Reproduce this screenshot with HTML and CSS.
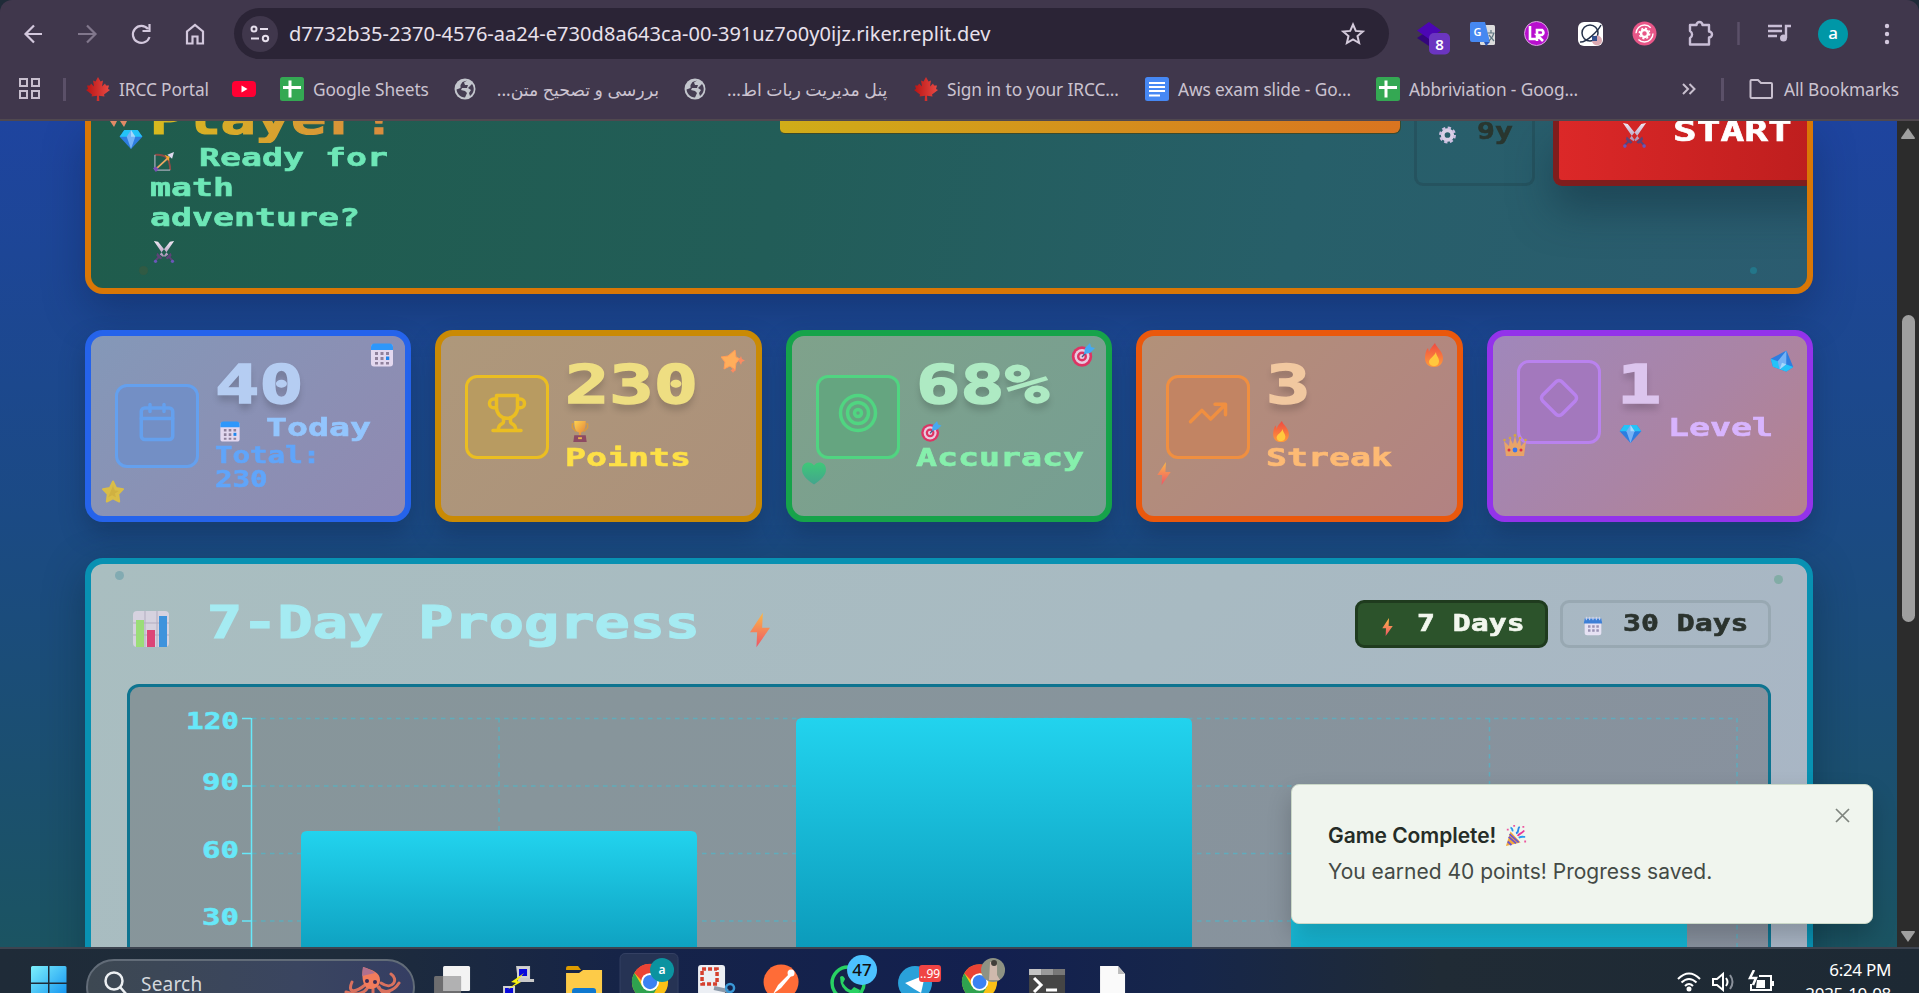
FILE: index.html
```html
<!DOCTYPE html>
<html lang="en">
<head>
<meta charset="utf-8">
<title>Math Adventure</title>
<link rel="stylesheet" href="styles.css">
</head>
<body>
<svg class="defs" width="0" height="0">
  <defs>
    <linearGradient id="gBolt" x1="0" y1="0" x2="0" y2="1"><stop offset="0" stop-color="#fbb848"/><stop offset="1" stop-color="#ee5566"/></linearGradient>
    <linearGradient id="gFire" x1="0" y1="0" x2="0" y2="1"><stop offset="0" stop-color="#ef4a42"/><stop offset="1" stop-color="#ff9a3a"/></linearGradient>
    <linearGradient id="gCup" x1="0" y1="0" x2="1" y2="1"><stop offset="0" stop-color="#ffd34f"/><stop offset="1" stop-color="#e0803a"/></linearGradient>
    <linearGradient id="gBlade" x1="0" y1="0" x2="0" y2="1"><stop offset="0" stop-color="#f1e9f4"/><stop offset="1" stop-color="#a78fb5"/></linearGradient>
    <linearGradient id="gHeart" x1="0" y1="0" x2="0" y2="1"><stop offset="0" stop-color="#3fc878"/><stop offset="1" stop-color="#43a58d"/></linearGradient>
    <linearGradient id="gBar" x1="0" y1="0" x2="0" y2="1"><stop offset="0" stop-color="#22d3ee"/><stop offset="1" stop-color="#0891b2"/></linearGradient>
    <linearGradient id="gWin" x1="0" y1="0" x2="1" y2="1"><stop offset="0" stop-color="#7df0fc"/><stop offset="1" stop-color="#0a8cf0"/></linearGradient>
    <linearGradient id="gLeaf" x1="0" y1="0" x2="1" y2="0"><stop offset="0" stop-color="#b81414"/><stop offset="1" stop-color="#ea4a44"/></linearGradient>
    <symbol id="calendar" viewBox="0 0 24 24"><rect x="1" y="1" width="22" height="22.500" rx="3" fill="#e3d8ef"/><path d="M1 7V4a3.500 3.500 0 0 1 3.500-3.500h15A3.500 3.500 0 0 1 23 4v3z" fill="#2d97fb"/><g fill="#8f819c"><path d="M5 9h3v3H5zM10.500 9h3v3h-3zM16 9h3v3h-3zM5 14h3v3H5zM10.500 14h3v3h-3zM5 19h3v2.500H5zM10.500 19h3v2.500h-3zM16 19h3v2.500h-3z"/></g><path d="M16 13.500h3.300V17H16z" fill="#1d86ee"/></symbol>
    <symbol id="pad" viewBox="0 0 24 24"><rect x="2" y="2" width="20" height="21" rx="3" fill="#e6e2f4"/><path d="M1 9l1-6h20l1 6z" fill="#3d7fd6"/><path d="M4 1v4M8 1v4M12 1v4M16 1v4M20 1v4" stroke="#cdd6ee" stroke-width="1.200"/><path d="M6 11h3v3H6zM11 11h3v3h-3zM16 11h3v3h-3zM6 16h3v3H6zM11 16h3v3h-3zM16 16h3v3h-3z" fill="#9b94b5"/></symbol>
    <symbol id="star" viewBox="0 0 24 24"><path d="M12 1.500l3.200 6.800 7.300 1.200-5 5.300 1 7.700-6.500-3.300-6.500 3.300 1-7.700-5-5.300 7.300-1.200z" fill="#d9bd48" stroke="#d9bd48" stroke-width="2" stroke-linejoin="round"/><path d="M12 6l2 5 4 .5-4 2.500 1 4-4-2-4 2" fill="#c9a83e" opacity=".6"/></symbol>
    <symbol id="sparkstar" viewBox="0 0 24 24"><path d="M14 1l1 7 4 2-4 4-1 7-5-4-6 3 1-7-4-5 7-1z" fill="#ffae5b" stroke="#ff9c58" stroke-linejoin="round"/><path d="M20 7l1 3 3 1.500-3 1.500-1 3-1.500-3-2-1.500 2-1.500zM12 18.500l1 2 2 1-2 1-1 1.500-1-1.500-1.500-1 1.500-1z" fill="#fb8b61"/></symbol>
    <symbol id="target" viewBox="0 0 24 24"><circle cx="11" cy="13.500" r="10.200" fill="#dd3464"/><circle cx="11" cy="13.500" r="7.500" fill="#e9cbe0"/><circle cx="11" cy="13.500" r="5" fill="#dd3464"/><circle cx="11" cy="13.500" r="2.500" fill="#e9cbe0"/><path d="M11 14l8-9" stroke="#445b8c" stroke-width="1.300"/><path d="M13 11l1-6 5-5 1 4 4 1-5 5z" fill="#45a9f2"/></symbol>
    <symbol id="fire" viewBox="0 0 24 24"><path d="M13 0c1 4 8 8 8 15 0 6-4 9-9 9s-9-3-9-9c0-4 1-8 3-10l1 4c1-4 4-6 6-9z" fill="url(#gFire)"/><path d="M14 9c0 4 3 5 3 9 0 3-2 5-5 5s-5-2-5-4c0-4 5-5 7-10z" fill="#ffc83e"/></symbol>
    <symbol id="bolt" viewBox="0 0 14 24"><path d="M9 0L0 13.500h5L4.500 24 14 10.500H8.500z" fill="url(#gBolt)"/></symbol>
    <symbol id="gem" viewBox="0 0 24 20"><path d="M5 0h14l5 7-12 13L0 7z" fill="#2d7de0"/><path d="M5 0h14l5 7H0z" fill="#24c3f8"/><path d="M7.500 7L12 0l4.500 7L12 20z" fill="#75b2f5"/><path d="M12 0l4.500 7H12z" fill="#a5d9fb"/></symbol>
    <symbol id="crown" viewBox="0 0 24 22"><path d="M1 7l5 5 1-8 3 6 2-8 2 8 3-6 1 8 5-5-2 15H3z" fill="#e8a468"/><path d="M3 13h18l-.6 9H3.600z" fill="#e8a468"/><g fill="#d5a63f"><circle cx="1.500" cy="6" r="1.300"/><circle cx="7" cy="4" r="1.300"/><circle cx="12" cy="1.500" r="1.400"/><circle cx="17" cy="4" r="1.300"/><circle cx="22.500" cy="6" r="1.300"/></g><circle cx="12" cy="16" r="2.400" fill="#3975ea"/><circle cx="6" cy="16" r="1.500" fill="#dc3045"/><circle cx="18" cy="16" r="1.500" fill="#dc3045"/></symbol>
    <symbol id="heart" viewBox="0 0 24 22"><path d="M12 22C5 17 0 13 0 7 0-1 9-2 12 3c3-5 12-4 12 4C24 13 19 17 12 22z" fill="url(#gHeart)"/></symbol>
    <symbol id="cup" viewBox="0 0 18 22"><path d="M3 3H1v4l4 4M15 3h2v4l-4 4" fill="none" stroke="#d99b3b" stroke-width="1.500"/><path d="M3 0h12c0 7-1 11-5 12v3H8v-3C4 11 3 7 3 0z" fill="url(#gCup)"/><path d="M3 15h12l1 7H2z" fill="#8d4a63"/><path d="M7 17h4v2H7z" fill="#efb34d"/></symbol>
    <symbol id="swords" viewBox="0 0 24 26"><path d="M0 0l5 1 12 15-4 3zM24 0l-5 1L7 16l4 3z" fill="url(#gBlade)"/><path d="M4 14l6 6-2 1.500-2-1-4 4-1.500-1.500 4-4-1.500-2zM20 14l-6 6 2 1.500 2-1 4 4 1.500-1.500-4-4 1.500-2z" fill="#5d4377"/><circle cx="2" cy="24" r="1.900" fill="#6a57b8"/><circle cx="22" cy="24" r="1.900" fill="#6a57b8"/></symbol>
    <symbol id="bow" viewBox="0 0 22 21"><path d="M2 3C13 2 18 7 18 19" fill="none" stroke="#8d4b46" stroke-width="2"/><path d="M2 3v16h16" fill="none" stroke="#cfc6dc" stroke-width="1"/><path d="M3 18L17 5" stroke="#eda862" stroke-width="1.800"/><path d="M22 0l-2 7-5-4z" fill="#e0daf0"/><path d="M0 17l3-2 3 3-3 3z" fill="#7b51b6"/><path d="M12 3l5 2v5z" fill="#f3a72a"/></symbol>
    <symbol id="gear" viewBox="0 0 20 18"><circle cx="10" cy="9" r="5" fill="none" stroke="#d9cfe6" stroke-width="4"/><circle cx="10" cy="9" r="7.600" fill="none" stroke="#cdbfe0" stroke-width="2.600" stroke-dasharray="3.400 2.570"/></symbol>
    <symbol id="chart" viewBox="0 0 36 36"><rect width="36" height="36" rx="4" fill="#d6d2df"/><path d="M0 12h36M0 24h36M12 0v36M24 0v36" stroke="#b3adc0"/><path d="M3 9h8v27H3z" fill="#9bdd78"/><path d="M14 19h8v17h-8z" fill="#dc4577"/><path d="M26 5h8v31h-8z" fill="#3e93dc"/></symbol>
    <symbol id="party" viewBox="0 0 24 24"><path d="M6 7l11 12L1 23z" fill="#f4a93b"/><path d="M4 13l8 7M5 10l10 9M3 18l4 4" stroke="#6c55cf" stroke-width="2"/><g fill="none" stroke-width="2"><path d="M8 7C9 5 7 3 6 3M15 14c3-2 5-1 7-1" stroke="#289bee"/><path d="M12 9c4-1 1-5 4-7" stroke="#2c8ae8"/><path d="M14 12c1-3 4-2 7-6" stroke="#e7399a"/></g><path d="M2 4h2v2H2zM19 1h2v2h-2zM21 17h2v2h-2zM9 0h2v2H9z" fill="#ed579f"/></symbol>
    <symbol id="leaf" viewBox="0 0 24 24"><path d="M12 0l2.500 4.500L17 3.500l-1 6 3-3 1 2h3l-1 3.500 2 1-6 4.500.5 2-5.500-.7.300 5.200h-2.600l.3-5.200-5.500.7.500-2L0 13l2-1-1-3.500h3l1-2 3 3-1-6 2.500 1z" fill="url(#gLeaf)"/></symbol>
    <symbol id="sheet" viewBox="0 0 24 24"><rect width="24" height="24" rx="2.500" fill="#34a853"/><path d="M3 10.500h18M10 3.500v17" stroke="#fff" stroke-width="3"/></symbol>
    <symbol id="globe" viewBox="0 0 22 22"><circle cx="11" cy="11" r="10.500" fill="#c3c6cd"/><path d="M13 2.500l-3 2 1 2.500h3l-1 3H8l-1 2 4 1 2 2-2 4.500c-5 0-8-4-8.500-8l4-1.500 0-3 2-3zM18 6c3 4 2 9-2 12l-1-3 2-3-3-2 2-2z" fill="#453d52"/></symbol>
    <symbol id="chrome" viewBox="0 0 40 40"><circle cx="20" cy="20" r="19" fill="#fbc116"/><path d="M3.500 10.500A19 19 0 0 0 20 39l8-14-8-5-8 5z" fill="#2fa24f"/><path d="M3.500 10.500A19 19 0 0 1 36.500 10.500H20l-8 9z" fill="#ea4335"/><circle cx="20" cy="20" r="9.500" fill="#fff"/><circle cx="20" cy="20" r="7.500" fill="#3b82f2"/></symbol>
  </defs>
</svg>

<header class="browser">
  <div class="toolbar">
    <svg class="nav" viewBox="0 0 216 52"><g fill="none" stroke="#d3c8dd" stroke-width="2.200"><path d="M42 26H26M34 17.500L25.500 26l8.500 8.500"/><path d="M78 26h16M87 17.500l8.500 8.500-8.500 8.500" stroke="#81778c"/><path d="M148 21a8.500 8.500 0 1 0 1.500 8M149.500 16v7h-7"/><path d="M187 35.500V23.500l8-6.500 8 6.500v12h-5.500v-7h-5v7z"/></g></svg>
    <div class="omnibox">
      <span class="chip"><svg width="20" height="18" viewBox="0 0 20 18" fill="none" stroke="#e6dfec" stroke-width="2"><circle cx="4" cy="4" r="2.500"/><path d="M10 4h8M1 13.500h8"/><circle cx="15.500" cy="13.500" r="2.700"/></svg></span>
      <span class="url">d7732b35-2370-4576-aa24-e730d8a643ca-00-391uz7o0y0ijz.riker.replit.dev</span>
      <svg class="fav" width="24" height="24" viewBox="0 0 24 24" fill="none" stroke="#d5cbdc" stroke-width="2"><path d="M12 2.500l2.800 6.400 7 .6-5.300 4.600 1.600 6.900-6.100-3.700L5.900 21l1.600-6.900-5.300-4.600 7-.6z"/></svg>
    </div>
    <svg class="exts" width="519" height="52" viewBox="1400 8 519 52">
      <path d="M1429 30l12 8-12 8-12-8z" fill="#34057c"/><path d="M1429 22l12 8.500-12 8.500-12-8.500z" fill="#4c06b4"/><rect x="1429" y="33" width="21" height="21.500" rx="5" fill="#6b35c0"/><text x="1439.500" y="50" class="badge8">8</text>
      <rect x="1480" y="25" width="15" height="20" rx="1.500" fill="#dcdcdc"/><path d="M1472 22h13l5 20h-18a2 2 0 0 1-2-2V24a2 2 0 0 1 2-2z" fill="#4688f1"/><path d="M1484 42l6 0-4 4z" fill="#2b55b5"/><text x="1477.500" y="36" class="gt">G</text><path d="M1487.500 33h7M1491 30v3M1494 33c-1 4-3 6-5 8M1489 35l5 6" stroke="#5f7681" stroke-width="1.200" fill="none"/>
      <circle cx="1536.500" cy="33.500" r="12" fill="#b80fce" stroke="#d7a7dd"/><path d="M1530 26v13h7M1537 41V30h5q3 3 0 5h-5l6 6" stroke="#fff" stroke-width="2.600" fill="none"/>
      <rect x="1578" y="22" width="25" height="24" rx="6" fill="#fff"/><circle cx="1590" cy="33" r="8" fill="none" stroke="#243049" stroke-width="1.500"/><path d="M1580 42c6 1 18-11 21-17" stroke="#243049" stroke-width="1.500" fill="none"/><circle cx="1597" cy="40.500" r="5" fill="#dba9b2"/><path d="M1592 36h5v5h-5z" fill="#34508e"/>
      <circle cx="1644.500" cy="33.500" r="12" fill="#e85688"/><circle cx="1644.500" cy="33.500" r="8.500" fill="none" stroke="#fff" stroke-width="1.400" stroke-dasharray="20 6.700"/><circle cx="1644.500" cy="33.500" r="3.500" fill="none" stroke="#fff" stroke-width="2.500"/><circle cx="1644.500" cy="33.500" r="5.200" fill="none" stroke="#fff" stroke-width="1.500" stroke-dasharray="2 2.080"/>
      <path d="M1690 25h6.500a3 3 0 0 1 6 0h6.500v6.500a3 3 0 0 1 0 6v7h-19v-6.500a4 4 0 0 0 0-7z" fill="none" stroke="#c9bed6" stroke-width="2.400" stroke-linejoin="round"/>
      <path d="M1738.500 22v23" stroke="#5b5068" stroke-width="2.500"/>
      <path d="M1768 26h14M1768 31h14M1768 36h9M1786 38V26h5" fill="none" stroke="#c9bed6" stroke-width="2.400"/><circle cx="1783.500" cy="38" r="3.500" fill="#c9bed6"/>
      <circle cx="1833" cy="34" r="15" fill="#0097a7"/><text x="1833" y="39" class="av">a</text>
      <g fill="#d3c8dd"><circle cx="1887" cy="26" r="2.200"/><circle cx="1887" cy="34" r="2.200"/><circle cx="1887" cy="42" r="2.200"/></g>
    </svg>
  </div>
  <nav class="bookmarks">
    <svg class="apps" width="22" height="22" viewBox="0 0 22 22" fill="none" stroke="#c8bfce" stroke-width="2"><path d="M1 1h7v7H1zM13 1h7v7h-7zM1 13h7v7H1zM13 13h7v7h-7z"/></svg>
    <i class="sep s1"></i>
    <span class="bm b1"><svg><use href="#leaf"/></svg>IRCC Portal</span>
    <span class="bm b2"><svg viewBox="0 0 24 24"><rect y="4" width="24" height="16" rx="4" fill="#ff0033"/><path d="M9.500 8.500v7l6-3.500z" fill="#fff"/></svg></span>
    <span class="bm b3"><svg><use href="#sheet"/></svg>Google Sheets</span>
    <span class="bm b4 fa"><svg><use href="#globe"/></svg><bdi dir="rtl">بررسی و تصحیح متن...</bdi></span>
    <span class="bm b5 fa"><svg><use href="#globe"/></svg><bdi dir="rtl">پنل مدیریت ربات اط...</bdi></span>
    <span class="bm b6"><svg><use href="#leaf"/></svg>Sign in to your IRCC...</span>
    <span class="bm b7"><svg viewBox="0 0 24 24"><rect width="24" height="24" rx="2.500" fill="#4688f4"/><path d="M4 6h16M4 10h16M4 14h16M4 18.500h11" stroke="#fff" stroke-width="2.200"/></svg>Aws exam slide - Go...</span>
    <span class="bm b8"><svg><use href="#sheet"/></svg>Abbriviation - Goog...</span>
    <svg class="more" width="16" height="12" viewBox="0 0 16 12" fill="none" stroke="#c8bfce" stroke-width="2"><path d="M2 1l5 5-5 5M8.500 1l5 5-5 5"/></svg>
    <i class="sep s2"></i>
    <span class="bm b9"><svg viewBox="0 0 24 24" fill="none" stroke="#c8bfce" stroke-width="2"><path d="M1.500 20V4q0-1 1-1H9l3 3h10q1 0 1 1v13q0 1-1 1H2.500q-1 0-1-1z"/></svg>All Bookmarks</span>
  </nav>
</header>

<div class="viewport">
<main class="page">
  <section class="hero">
    <div class="intro">
      <div class="name px xl">Player!</div>
      <div class="line"><svg class="bow"><use href="#bow"/></svg><span class="px md">Ready for</span></div>
      <div class="px md">math</div>
      <div class="px md">adventure?</div>
      <div class="line"><svg class="sw"><use href="#swords"/></svg></div>
    </div>
    <div class="xp"></div>
    <div class="age"><svg><use href="#gear"/></svg><span class="px sm">9y</span></div>
    <div class="start"><svg><use href="#swords"/></svg><span class="px st">START</span></div>
    <svg class="rocks" viewBox="0 0 18 6"><path d="M0 0h7L4 6zM10 0h7l-3 6z" fill="#e28a66"/></svg>
    <svg class="herogem"><use href="#gem"/></svg>
    <i class="dot d1"></i><i class="dot d2"></i>
  </section>

  <section class="stats">
    <article class="stat blue">
      <div class="box low"><svg viewBox="0 0 24 24"><path d="M8 2v4M16 2v4M3 10h18"/><rect x="3" y="4" width="18" height="18" rx="2"/></svg></div>
      <div class="info"><div class="num px">40</div><div class="line"><svg><use href="#calendar"/></svg><span class="px md">Today</span></div><div class="total px">Total:</div><div class="total px">230</div></div>
      <svg class="tr"><use href="#calendar"/></svg><svg class="bl star"><use href="#star"/></svg>
    </article>
    <article class="stat gold">
      <div class="box"><svg viewBox="0 0 24 24"><path d="M6 9H4.500a2.500 2.500 0 0 1 0-5H6M18 9h1.500a2.500 2.500 0 0 0 0-5H18M4 22h16M10 14.660V17c0 .550-.470.980-.970 1.210C7.850 18.750 7 20.240 7 22M14 14.660V17c0 .550.470.980.970 1.210C16.150 18.750 17 20.240 17 22M18 2H6v7a6 6 0 0 0 12 0V2Z"/></svg></div>
      <div class="info"><div class="num px">230</div><div class="line"><svg><use href="#cup"/></svg></div><div class="px md">Points</div></div>
      <svg class="tr spark"><use href="#sparkstar"/></svg>
    </article>
    <article class="stat green">
      <div class="box"><svg viewBox="0 0 24 24"><circle cx="12" cy="12" r="10"/><circle cx="12" cy="12" r="6"/><circle cx="12" cy="12" r="2"/></svg></div>
      <div class="info"><div class="num px">68%</div><div class="line"><svg><use href="#target"/></svg></div><div class="px md">Accuracy</div></div>
      <svg class="tr"><use href="#target"/></svg><svg class="bl"><use href="#heart"/></svg>
    </article>
    <article class="stat orange">
      <div class="box"><svg viewBox="0 0 24 24"><path d="M22 7l-8.500 8.500-5-5L2 17M16 7h6v6"/></svg></div>
      <div class="info"><div class="num px">3</div><div class="line"><svg><use href="#fire"/></svg></div><div class="px md">Streak</div></div>
      <svg class="tr"><use href="#fire"/></svg><svg class="bl"><use href="#bolt"/></svg>
    </article>
    <article class="stat purple">
      <div class="box high"><svg viewBox="0 0 24 24"><path d="M2.700 10.300a2.410 2.410 0 0 0 0 3.410l7.590 7.590a2.410 2.410 0 0 0 3.410 0l7.590-7.590a2.410 2.410 0 0 0 0-3.410l-7.590-7.590a2.410 2.410 0 0 0-3.410 0Z"/></svg></div>
      <div class="info"><div class="num px">1</div><div class="line"><svg class="lvl"><use href="#gem"/></svg><span class="px md">Level</span></div></div>
      <svg class="tr tilt"><use href="#gem"/></svg><svg class="bl crown"><use href="#crown"/></svg>
    </article>
  </section>

  <section class="progress">
    <div class="head">
      <svg class="ico"><use href="#chart"/></svg>
      <h2 class="px xl">7-Day Progress</h2>
      <svg class="zap"><use href="#bolt"/></svg>
      <div class="range on"><svg><use href="#bolt"/></svg><span class="px sm">7 Days</span></div>
      <div class="range off"><svg><use href="#pad"/></svg><span class="px sm">30 Days</span></div>
    </div>
    <div class="plot">
      <svg width="1638" height="260" viewBox="130 687 1638 260">
        <g stroke="#22d3ee" stroke-opacity=".38" stroke-width="1.500" stroke-dasharray="4.500 4.500" fill="none"><path d="M252 718.500H1737M252 786H1737M252 853.500H1737M252 921H1737M499 718V947M994 718V947M1489.500 718V947M1737 718V947"/></g>
        <path d="M251.500 718V947M242 718.500h9M242 786h9M242 853.500h9M242 921h9" stroke="#67e8f9" stroke-width="1.500"/>
        <g fill="url(#gBar)"><path d="M301 988V837q0-6 6-6H691q6 0 6 6V988z"/><path d="M796 988V724q0-6 6-6H1186q6 0 6 6V988z"/><path d="M1291 988V904q0-6 6-6H1681q6 0 6 6V988z"/></g>
        <g class="tick"><text x="186" y="729" textLength="53" lengthAdjust="spacingAndGlyphs">120</text><text x="202" y="790" textLength="37" lengthAdjust="spacingAndGlyphs">90</text><text x="202" y="858" textLength="37" lengthAdjust="spacingAndGlyphs">60</text><text x="202" y="925" textLength="37" lengthAdjust="spacingAndGlyphs">30</text></g>
      </svg>
    </div>
    <i class="dot d3"></i><i class="dot d4"></i>
  </section>
</main>
<div class="scroll"><svg width="22" height="826" viewBox="0 0 22 826" fill="#9f9f9f"><path d="M11 7l7 10q0 1-1 1H5q-1 0-1-1z"/><rect x="5" y="194" width="13" height="307" rx="6.500"/><path d="M11 821l7-10q0-1-1-1H5q-1 0-1 1z"/></svg></div>
<aside class="toast">
  <svg class="x" width="15" height="15" viewBox="0 0 15 15" stroke="#7e847e" stroke-width="1.700"><path d="M1 1l13 13M14 1L1 14"/></svg>
  <div class="tt">Game Complete! <svg><use href="#party"/></svg></div>
  <div class="tb">You earned 40 points! Progress saved.</div>
</aside>
</div>

<footer class="taskbar">
  <svg class="win" width="36" height="27" viewBox="0 0 36 27"><path d="M0 1.500Q0 0 1.500 0H17v16.500H0zM18.500 0H34q1.500 0 1.500 1.500v15h-17zM0 18h17v17H0zM18.500 18h17v17h-17z" fill="url(#gWin)"/></svg>
  <div class="search">
    <svg width="24" height="24" viewBox="0 0 24 24" fill="none" stroke="#eceff2" stroke-width="2.500"><circle cx="10" cy="10" r="8.500"/><path d="M16 16l7 8"/></svg>
    <span>Search</span>
    <svg class="octo" width="58" height="27" viewBox="0 0 58 27"><g fill="none" stroke="#d9715e" stroke-width="3" stroke-linecap="round"><path d="M22 18C12 26 4 26 9 15M25 20c-4 8-14 8-22 5M38 16c12 8 18-4 10-9M35 20c6 8 16 4 21-4M30 22v8M36 20c2 5 6 8 10 6" /></g><path d="M20 0c9 3 17 5 17 13 0 6-5 9-9 9-7 0-10-8-8-22z" fill="#f27c5c"/><path d="M20 0c5 2 9 3 12 6l-13 3z" fill="#b0708e"/><circle cx="24" cy="14" r="2" fill="#3a2b55"/><circle cx="32" cy="15" r="2" fill="#3a2b55"/></svg>
  </div>
  <div class="pins">
    <svg viewBox="0 0 66 44"><rect x="24" y="17" width="27" height="25" rx="1.500" fill="#f3f3f3"/><rect x="15" y="27" width="27" height="25" rx="1.500" fill="#6d6d6f"/><path d="M24 27h18v15H24z" fill="#b1b1b2"/></svg>
    <svg viewBox="0 0 66 44"><path d="M31 17h14v13h4v3H33z" fill="#c9c9c9"/><path d="M33 19h10v9H33zM19 38h10v9H19z" fill="#0808dc" stroke="#d2d2d2" stroke-width="2"/><path d="M39 24L26 33l5 1-9 7 14-8-4-1z" fill="#f6ef0d"/></svg>
    <svg viewBox="0 0 66 44"><path d="M15 19q0-2 2-2h10l3 4h-15z" fill="#dd9b00"/><path d="M15 24h13l4-3h19v23H15z" fill="#fdcb48"/><rect x="21" y="39" width="24" height="10" rx="3" fill="#0f78cf"/></svg>
    <svg viewBox="0 0 66 44"><rect x="3" y="4.500" width="58" height="50" rx="5" fill="#263354" stroke="#344063"/><use href="#chrome" x="14" y="14" width="38" height="38"/><circle cx="45" cy="21" r="12" fill="#0b93a0"/><text x="45" y="25" class="mini">a</text></svg>
    <svg viewBox="0 0 66 44"><rect x="15" y="16" width="27" height="30" rx="3" fill="#eceff4"/><path d="M19 20h15v15H19z" fill="none" stroke="#d5402e" stroke-width="3.500" stroke-dasharray="4 2"/><path d="M31 39l14 3" stroke="#8c9aaa" stroke-width="4"/><circle cx="47" cy="39" r="4" fill="none" stroke="#3a98d6" stroke-width="2.500"/></svg>
    <svg viewBox="0 0 66 44"><circle cx="32" cy="33" r="17.500" fill="#ff6c37"/><path d="M24 45l5-9 12-12 2 2-11 13z" fill="#fff"/><circle cx="42" cy="24" r="3.500" fill="#fff"/></svg>
    <svg viewBox="0 0 66 44"><circle cx="32" cy="34" r="16" fill="#152349" stroke="#28d263" stroke-width="3.500"/><path d="M24 28q3-3 5 2l-2 4q4 6 8 7l3-3 6 3q-1 5-6 4Q24 43 24 28z" fill="#28d263"/><circle cx="46" cy="21" r="15" fill="#4cc2ff"/><text x="46" y="27" class="b47">47</text></svg>
    <svg viewBox="0 0 66 44"><circle cx="33" cy="34" r="17" fill="#2aa1da"/><path d="M23 34l20-8-4 18-7-4z" fill="#fff"/><rect x="37" y="16" width="22" height="17" rx="3" fill="#f04444"/><text x="48" y="29" class="b99">..99</text></svg>
    <svg viewBox="0 0 66 44"><use href="#chrome" x="13" y="14" width="37" height="38"/><circle cx="45" cy="21" r="12" fill="#8e9283"/><path d="M42 13h7v13l3 5h-11z" fill="#cfb9ad"/><circle cx="46" cy="14" r="3" fill="#403e39"/></svg>
    <svg viewBox="0 0 66 44"><rect x="15" y="20" width="36" height="30" fill="#454545"/><path d="M15 20h12v6H15z" fill="#c4c4c4"/><path d="M27 20h12v6H27z" fill="#999"/><path d="M39 20h12v6H39z" fill="#777"/><path d="M20 29l7 7-7 7M32 41h11" fill="none" stroke="#fff" stroke-width="3"/></svg>
    <svg viewBox="0 0 66 44"><path d="M20 17h18l7 8v25H20z" fill="#fafafa"/><path d="M38 17v8h7z" fill="#bcbcbc"/></svg>
  </div>
  <svg class="tray" width="98" height="22" viewBox="0 0 98 22" fill="none" stroke="#fff" stroke-width="2"><path d="M1 9q11-11 22 0M4.500 12.500q7.500-7 15 0M8 16q4-4 8 0"/><circle cx="12" cy="19" r="1.500" fill="#fff"/><path d="M36 9h4l6-5v16l-6-5h-4zM49 8q3 4 0 8"/><path d="M53 5q5 7 0 14" stroke="#8b919b"/><path d="M82 6h12v14H74v-6M96 11v5"/><path d="M77 0l-4 8h6l-3 7" stroke-width="2.500"/><path d="M80 10h8v8h-9z" fill="#fff" stroke="none"/></svg>
  <div class="clock"><span>6:24 PM</span><span>2025-10-08</span></div>
</footer>
</body>
</html>
```
FILE: styles.css
```css
* { box-sizing: border-box; }
body { margin: 0; width: 1919px; height: 993px; overflow: hidden; display: flex; flex-direction: column; background: #1f2b38; font-family: "Noto Sans", sans-serif; }
svg { display: block; flex: none; }
.defs { position: absolute; }

/* Browser chrome */
.browser { flex: none; height: 121px; background: #40374c; border-bottom: 2px solid #50484f; color: #cbc3d0; border-radius: 12px 12px 0 0; }
.toolbar { display: flex; height: 60px; padding-top: 8px; }
.nav { width: 216px; height: 52px; margin-right: 18px; }
.omnibox { display: flex; align-items: center; width: 1155px; height: 51px; border-radius: 26px; background: #2b2436; padding-left: 8px; }
.chip { display: grid; place-items: center; width: 36px; height: 36px; border-radius: 50%; background: #40374c; }
.url { width: 702px; margin-left: 11px; white-space: nowrap; font-size: 20px; letter-spacing: .04px; color: #e8e1ec; }
.fav { margin-left: 350px; }
.exts { margin-left: 11px; }
.badge8, .gt, .av, .mini, .b47, .b99 { text-anchor: middle; fill: #fff; font-weight: 600; }
.badge8 { font-size: 15px; }
.gt { font-size: 11px; }
.av { font-size: 17px; font-weight: 500; }
.bookmarks { display: flex; align-items: center; height: 58px; }
.apps { margin-left: 19px; }
.sep { width: 3px; height: 23px; background: #5b5068; }
.s1 { margin: 0 22px 0 22px; }
.bm { display: flex; align-items: center; gap: 9px; flex: none; white-space: nowrap; font-size: 17.300px; letter-spacing: -.1px; }
.bm svg { width: 24px; height: 24px; }
.b1 { width: 146px; margin-left: -2px; }
.b2 { width: 48px; }
.b3 { width: 174px; }
.b4 { width: 230px; }
.b5 { width: 230px; }
.fa svg { width: 22px; height: 22px; }
.fa bdi { width: 162px; margin-left: 12px; text-align: left; letter-spacing: 0; font-family: "Noto Sans", "DejaVu Sans", sans-serif; font-size: 17.300px; }
.b6 { width: 231px; }
.b7 { width: 231px; }
.b8 { width: 305px; }
.more { width: 16px; }
.s2 { margin: 0 25px 0 24px; }
.b9 { gap: 11px; }

/* Page */
.viewport { position: relative; flex: none; display: flex; height: 826px; overflow: hidden; }
.page { width: 1897px; height: 826px; padding: 0 84px 0 85px; overflow: hidden; background: linear-gradient(180deg, #1e449f 0%, #1b4a84 48%, #1b4f70 78%, #1b5462 100%); }
.scroll { width: 22px; background: #2c2c2c; }
.px { font-family: "DejaVu Sans Mono", monospace; font-weight: 700; -webkit-text-stroke: .6px currentColor; white-space: pre; width: max-content; transform-origin: 0 0; }
.md { font-size: 25px; line-height: 30px; transform: scaleX(1.395); }
.sm { font-size: 23px; line-height: 30px; transform: scaleX(1.295); }
.st { font-size: 28px; line-height: 34px; transform: scaleX(1.41); }
.xl { font-size: 45px; line-height: 50px; transform: scaleX(1.3); margin: 0; -webkit-text-stroke-width: 1.200px; }
.line { display: flex; height: 30px; }
.dot { position: absolute; width: 9px; height: 9px; border-radius: 50%; background: currentColor; opacity: .5; }

.hero { position: relative; display: flex; align-items: flex-start; height: 173px; border: 6px solid #d97706; border-top: 0; border-radius: 0 0 18px 18px; padding-left: 59px; overflow: hidden; background: linear-gradient(100deg, #1f5c4c, #225d58 40%, #275f69 70%, #2b5c70); box-shadow: 0 18px 40px rgba(10, 30, 70, .35); }
.intro { flex: none; width: 630px; margin-top: -27px; }
.name { height: 49px; color: transparent; background: linear-gradient(90deg, #d8ba1e, #d98a40); background-clip: text; -webkit-background-clip: text; }
.intro .md { color: #6ee7b7; }
.bow { width: 21px; height: 20px; margin: 9px 25px 0 3px; }
.sw { width: 22px; height: 22px; margin: 8px 0 0 3px; }
.xp { flex: none; width: 621px; height: 13px; border: 2px solid #3a4a2c; border-width: 0 1px 1px 0; border-radius: 0 0 7px 5px; background: linear-gradient(90deg, #d0ad18, #d97420); }
.age { flex: none; display: flex; width: 121px; height: 65px; margin-left: 13px; border: 3px solid #25535f; border-top: 0; border-radius: 0 0 9px 9px; padding-left: 21px; color: #29362f; }
.age svg { width: 19px; height: 18px; margin-top: 5px; }
.age .px { margin: -5px 0 0 20px; }
.start { flex: none; display: flex; width: 290px; height: 65px; margin-left: 18px; border: 6px solid #7f1d1d; border-top: 0; border-radius: 0 0 9px 9px; padding-left: 63px; background: linear-gradient(90deg, #dc2828, #bb1d1d); color: #fff; box-shadow: 0 24px 40px rgba(18, 50, 66, .5); }
.start svg { width: 25px; height: 25px; margin-top: 2px; }
.start .px { margin: -6px 0 0 26px; }
.rocks { position: absolute; left: 19px; top: 0; width: 18px; height: 6px; }
.herogem { position: absolute; left: 28px; top: 9px; width: 24px; height: 19px; }
.d1 { left: 48px; top: 145px; color: #42583a; }
.d2 { left: 1659px; top: 146px; width: 7px; height: 7px; color: #1c8fa4; }

.stats { display: grid; grid-template-columns: repeat(5, 1fr); gap: 24px; margin-top: 36px; }
.stat { position: relative; display: flex; align-items: flex-start; height: 192px; border: 6px solid; border-radius: 18px; padding-left: 24px; box-shadow: 0 12px 24px rgba(15, 35, 70, .35); }
.box { flex: none; width: 84px; height: 84px; margin-top: 39px; padding: 14px 18px; border: 3px solid; border-radius: 12px; }
.box svg { width: 42px; height: 42px; fill: none; stroke: currentColor; stroke-width: 2; stroke-linecap: round; stroke-linejoin: round; }
.low { margin-top: 48px; }
.high { margin-top: 24px; }
.info { padding: 22px 0 0 16px; }
.num { font-size: 53px; line-height: 54px; height: 55px; transform: scaleX(1.39); -webkit-text-stroke-width: 1.500px; text-shadow: 0 6px 6px rgba(0, 0, 0, .18); }
.info .line svg { width: 24px; height: 21px; margin: 8px 24px 0 3px; }
.info .line .lvl { width: 23px; height: 18px; margin: 12px 26px 0 2px; }
.total { font-size: 23.300px; line-height: 24px; transform: scaleX(1.25); color: #60a5fa; }
.tr { position: absolute; right: 11px; top: 7px; width: 24px; height: 24px; }
.spark { top: 13px; }
.tilt { top: 14px; right: 12px; height: 20px; transform: rotate(-160deg) scaleX(-1); }
.bl { position: absolute; left: 10px; bottom: 31px; width: 24px; height: 23px; }
.star { bottom: 13px; }
.crown { left: 10px; bottom: 60px; height: 22px; }
.blue { border-color: #2563eb; background: linear-gradient(135deg, #8498b8, #9089b1); color: #93c5fd; }
.blue .num { color: #b5cdf2; }
.blue .box { color: #64a0ee; background: #738fc5; }
.gold { border-color: #ca8a04; background: linear-gradient(135deg, #ae987b, #ac907a); color: #fde047; }
.gold .num { color: #eede82; }
.gold .box { color: #ebbe21; background: #b89b61; }
.green { border-color: #16a34a; background: linear-gradient(135deg, #7fa28b, #769e92); color: #86efac; }
.green .num { color: #aeeac3; }
.green .box { color: #50d581; background: #65a580; }
.orange { border-color: #ea580c; background: linear-gradient(135deg, #b29179, #b28282); color: #fdba74; }
.orange .num { color: #f1c8a0; }
.orange .box { color: #f08f40; background: #c28463; }
.purple { border-color: #9333ea; background: linear-gradient(135deg, #a087bb, #aa84a5 55%, #b6828d); color: #d8b4fe; }
.purple .num { color: #dcc5ee; }
.purple .box { color: #b982ee; background: #a378bd; }

.progress { position: relative; height: 600px; margin-top: 36px; border: 6px solid #0891b2; border-radius: 18px; padding: 33px 36px 0; background: linear-gradient(135deg, #a9bec0, #a8bac2 50%, #a9b4c6); box-shadow: 0 12px 40px rgba(12, 40, 60, .45); }
.head { display: flex; height: 87px; }
.ico { width: 36px; height: 36px; margin: 14px 0 0 6px; }
.head h2 { width: 380px; margin-left: 38px; padding-top: 1px; color: #a5ebf2; }
.zap { width: 20px; height: 36px; margin: 15px 0 0 163px; }
.range { display: flex; height: 48px; margin-top: 3px; border: 3px solid; border-radius: 9px; }
.range .px { margin-top: 5px; }
.on { width: 193px; margin-left: 585px; padding-left: 23px; border-color: #1f3b1e; background: #2c532b; }
.on .px { color: #f2f7ee; margin-left: 23px; }
.on svg { width: 13px; height: 18px; margin-top: 15px; }
.off { width: 211px; margin-left: 12px; padding-left: 20px; border-color: #98a8b2; }
.off .px { color: #2b332e; margin-left: 20px; }
.off svg { width: 20px; height: 20px; margin-top: 13px; }
.plot { height: 460px; border: 3px solid #0e7490; border-radius: 12px; background: linear-gradient(135deg, #87969a, #87949c 50%, #88909f); }
.tick { font-family: "DejaVu Sans Mono", monospace; font-weight: 700; font-size: 23px; fill: #67e8f9; stroke: #67e8f9; stroke-width: .5px; }
.d3 { left: 24px; top: 7px; color: #5b98a4; }
.d4 { left: 1683px; top: 11px; color: #5ba287; }

.toast { position: absolute; left: 1291px; top: 663px; width: 582px; height: 140px; padding: 36px 36px 0; border: 1px solid #cbd8c8; border-radius: 8px; background: #f0f5ee; box-shadow: 0 12px 24px rgba(0, 0, 0, .2); font: 21px/30px Inter, sans-serif; color: #444a45; }
.tt { display: flex; gap: 9px; align-items: center; font-weight: 600; color: #252c27; letter-spacing: -.05px; }
.tt svg { width: 22px; height: 22px; }
.tb { margin-top: 6px; white-space: nowrap; }
.x { position: absolute; right: 22px; top: 23px; }

/* Taskbar */
.taskbar { flex: none; display: flex; height: 46px; border-top: 2px solid #3d4450; overflow: hidden; background: linear-gradient(90deg, #1f2b38 0, #1e2c3b 18%, #152349 34%, #13204f 52%, #16264a 62%, #202b35 75%, #1d2934 100%); }
.win { margin: 17px 20px 0 31px; }
.search { display: flex; flex: none; width: 329px; height: 56px; margin: 10px 0 0 -1px; padding-left: 16px; border: 2px solid #626c78; border-radius: 28px; background: linear-gradient(90deg, #3d4852, #3a4560 65%, #353e63); color: #d4d8dd; font-size: 19px; }
.search > svg:first-child { margin-top: 10px; }
.search span { width: 202px; margin: 8px 0 0 13px; line-height: 30px; letter-spacing: .2px; }
.octo { margin-top: 6px; }
.pins { display: flex; margin-left: 4px; }
.pins svg { width: 66.100px; height: 44px; }
.mini { font-size: 12px; }
.b47 { font-size: 17px; fill: #111; font-weight: 500; }
.b99 { font-size: 12px; font-weight: 400; }
.tray { margin: 21px 0 0 531px; }
.clock { display: flex; flex-direction: column; align-items: flex-end; width: 116px; margin-top: 9px; color: #fff; font-size: 17px; line-height: 24px; letter-spacing: -.3px; }
```
